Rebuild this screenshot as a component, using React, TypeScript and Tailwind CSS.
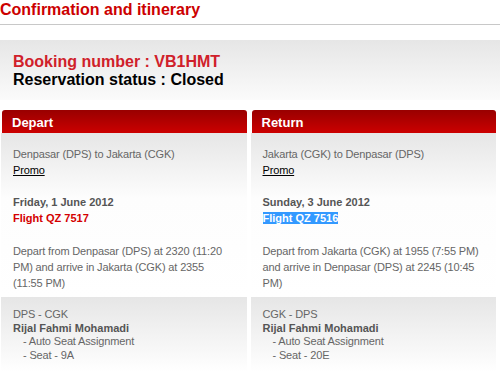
import React from "react";

const font = { fontFamily: '"Liberation Sans", Arial, sans-serif' };

function Column({
  title,
  route,
  date,
  flight,
  selected,
  details,
  seg,
  seat,
  pl,
}: {
  title: string;
  route: string;
  date: string;
  flight: string;
  selected?: boolean;
  details: string;
  seg: string;
  seat: string;
  pl: string;
}) {
  return (
    <div className="flex-1 flex flex-col min-w-0">
      <div className="h-[23px] ml-[1px] rounded-t-[3px] bg-gradient-to-b from-[#990000] to-[#cc0000] pl-[10px] pt-[5px] text-[13px] leading-[16px] font-bold text-white">
        {title}
      </div>
      <div
        className={`bg-gradient-to-b from-[#e6e6e6] via-[#fdfdfd] via-[40%] to-white pt-[13px] pb-[6px] pr-[15px] text-[11px] leading-[16px] tracking-[-0.15px] text-[#666] ${pl}`}
      >
        <div>{route}</div>
        <div>
          <span className="text-black underline">Promo</span>
        </div>
        <div className="h-[16px]" />
        <div className="font-bold tracking-normal text-[#555]">{date}</div>
        <div className="font-bold tracking-normal text-[#d40000]">
          {selected ? (
            <span className="bg-[#3399ff] text-white">{flight}</span>
          ) : (
            flight
          )}
        </div>
        <div className="h-[17px]" />
        <div>{details}</div>
      </div>
      <div
        className={`bg-gradient-to-b from-[#e6e6e6] to-white pt-[11px] pb-[10px] text-[11px] leading-[13.5px] tracking-[-0.15px] text-[#666] ${pl}`}
      >
        <div>{seg}</div>
        <div className="font-bold tracking-normal text-[#555]">Rijal Fahmi Mohamadi</div>
        <div className="pl-[10px]">- Auto Seat Assignment</div>
        <div className="pl-[10px]">- Seat - {seat}</div>
      </div>
    </div>
  );
}

export default function App() {
  return (
    <div className="w-[500px] h-[375px] overflow-hidden bg-white" style={font}>
      <div className="h-[25px] border-b border-[#c8c8c8] text-[16px] leading-[20px] font-bold text-[#cc0000]">
        Confirmation and itinerary
      </div>
      <div className="mt-[15px] h-[60px] bg-gradient-to-b from-[#e6e6e6] to-[#fbfbfb] pl-[13px] pt-[12.5px] text-[16px] leading-[18px] font-bold">
        <div className="text-[#d0202a]">Booking number : VB1HMT</div>
        <div className="text-black">Reservation status : Closed</div>
      </div>
      <div className="mt-[10px] flex gap-[4px] pl-[1px] pr-[4px]">
        <Column
          title="Depart"
          route="Denpasar (DPS) to Jakarta (CGK)"
          date="Friday, 1 June 2012"
          flight="Flight QZ 7517"
          details="Depart from Denpasar (DPS) at 2320 (11:20 PM) and arrive in Jakarta (CGK) at 2355 (11:55 PM)"
          seg="DPS - CGK"
          seat="9A"
          pl="pl-[12px]"
        />
        <Column
          title="Return"
          route="Jakarta (CGK) to Denpasar (DPS)"
          date="Sunday, 3 June 2012"
          flight="Flight QZ 7516"
          selected
          details="Depart from Jakarta (CGK) at 1955 (7:55 PM) and arrive in Denpasar (DPS) at 2245 (10:45 PM)"
          seg="CGK - DPS"
          seat="20E"
          pl="pl-[12px]"
        />
      </div>
    </div>
  );
}
